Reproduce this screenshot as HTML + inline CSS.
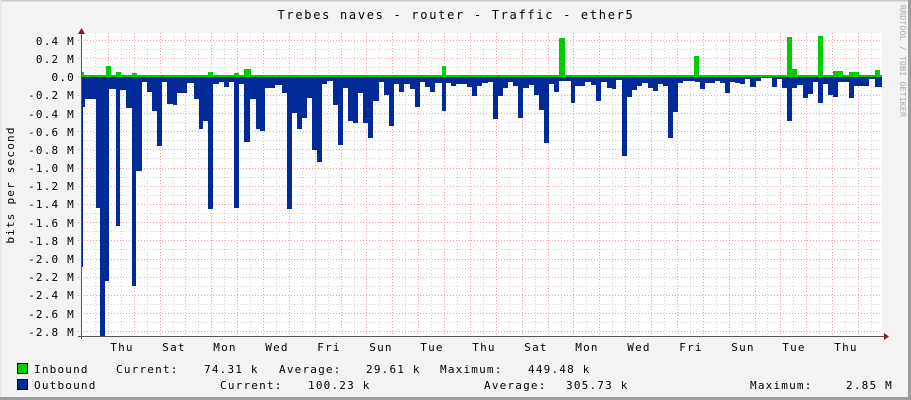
<!DOCTYPE html>
<html><head><meta charset="utf-8"><style>
html,body{margin:0;padding:0;background:#f3f3f3;}
svg{display:block;}
text{font-family:"DejaVu Sans Mono","Liberation Mono",monospace;fill:#000;}
</style></head><body>
<svg width="911" height="400" viewBox="0 0 911 400" xmlns="http://www.w3.org/2000/svg">
<rect x="0" y="0" width="911" height="400" fill="#f3f3f3"/>
<rect x="0" y="0" width="911" height="1.5" fill="#cbcbcb"/>
<rect x="0" y="0" width="1.5" height="400" fill="#e6e6e6"/>
<rect x="908" y="0" width="3" height="400" fill="#9c9c9c"/>
<rect x="0" y="397" width="911" height="3" fill="#9c9c9c"/>

<text x="456" y="19" font-size="12" letter-spacing="1.7" text-anchor="middle">Trebes naves - router - Traffic - ether5</text>

<rect x="81" y="33" width="801" height="303" fill="#fff"/>

<!-- minor horizontal -->
<path stroke="#d4d4d4" stroke-width="1" stroke-dasharray="1,2" fill="none" d="M81,49.5H882M81,67.5H882M81,86.5H882M81,104.5H882M81,122.5H882M81,140.5H882M81,158.5H882M81,177.5H882M81,195.5H882M81,213.5H882M81,231.5H882M81,249.5H882M81,268.5H882M81,286.5H882M81,304.5H882M81,322.5H882"/>
<!-- minor vertical -->
<path stroke="#d4d4d4" stroke-width="1" stroke-dasharray="1,2" fill="none" d="M95.5,33V339M121.5,33V339M147.5,33V339M173.5,33V339M198.5,33V339M224.5,33V339M250.5,33V339M276.5,33V339M302.5,33V339M328.5,33V339M354.5,33V339M379.5,33V339M405.5,33V339M431.5,33V339M457.5,33V339M483.5,33V339M509.5,33V339M535.5,33V339M561.5,33V339M586.5,33V339M612.5,33V339M638.5,33V339M664.5,33V339M690.5,33V339M716.5,33V339M742.5,33V339M767.5,33V339M793.5,33V339M819.5,33V339M845.5,33V339M871.5,33V339"/>
<!-- major horizontal -->
<path stroke="#f08888" stroke-opacity="0.8" stroke-width="1" stroke-dasharray="1,2" fill="none" d="M78,40.5H882M78,58.5H882M78,77.5H882M78,95.5H882M78,113.5H882M78,131.5H882M78,149.5H882M78,168.5H882M78,186.5H882M78,204.5H882M78,222.5H882M78,240.5H882M78,259.5H882M78,277.5H882M78,295.5H882M78,313.5H882M78,331.5H882"/>
<!-- major vertical -->
<path stroke="#f08888" stroke-opacity="0.8" stroke-width="1" stroke-dasharray="1,2" fill="none" d="M108.5,33V339M134.5,33V339M160.5,33V339M185.5,33V339M211.5,33V339M237.5,33V339M263.5,33V339M289.5,33V339M315.5,33V339M341.5,33V339M366.5,33V339M392.5,33V339M418.5,33V339M444.5,33V339M470.5,33V339M496.5,33V339M522.5,33V339M548.5,33V339M573.5,33V339M599.5,33V339M625.5,33V339M651.5,33V339M677.5,33V339M703.5,33V339M729.5,33V339M755.5,33V339M780.5,33V339M806.5,33V339M832.5,33V339M858.5,33V339"/>

<!-- inbound -->
<path fill="#00cc00" d="M81,77V72H84V75H106V66H111V75H116V72H121V75H132V73H137V75H208V72H213V75H234V73H239V75H244V69H251V75H442V66H446V75H559V38H565V75H694V56H699V75H787V37H792V69H797V75H818V36H823V75H833V71H843V75H849V72H859V75H875V70H880V75H882V77Z"/>
<!-- outbound -->
<path fill="#002a97" d="M81,77V267H83V107H85V99H96V208H100V336H105V281H109V89H116V226H120V90H126V108H132V286H136V171H142V82H147V92H152V111H157V146H162V82H167V104H173V105H177V93H187V83H194V99H199V129H203V121H208V209H213V84H219V82H224V87H229V82H234V208H239V84H244V142H250V99H256V129H260V131H265V88H275V85H282V93H287V209H292V113H297V129H302V118H307V98H312V150H317V162H322V84H327V81H333V105H338V145H343V88H348V121H353V123H358V93H363V123H368V138H373V101H379V82H384V95H389V126H394V84H399V92H404V84H410V89H415V107H420V82H425V87H430V92H435V83H442V111H446V83H451V86H456V84H467V87H472V96H477V86H482V83H488V82H493V119H498V96H503V88H508V82H513V86H518V118H523V88H529V85H534V95H539V110H544V143H549V84H554V92H559V81H571V103H575V86H585V82H591V85H596V101H601V82H607V88H612V89H616V80H622V156H627V97H632V90H637V86H642V83H648V88H653V91H658V84H663V86H668V138H673V112H678V83H683V81H695V82H700V89H705V83H715V81H720V83H725V93H730V82H735V83H740V84H745V79H750V87H756V81H761V78H772V87H777V79H782V88H787V121H792V88H797V85H803V98H808V94H813V82H818V103H823V84H828V95H833V97H838V82H849V98H854V86H869V79H875V87H882V77Z"/>

<!-- axes -->
<path stroke="#555" stroke-width="1" fill="none" d="M78,336.5H884M81.5,339V31"/>
<path fill="#8b1a1a" d="M884,333L889,336.5L884,340Z M78,34L81.5,28L85,34Z"/>

<!-- y labels -->
<g font-size="11" letter-spacing="1.2" text-anchor="end">
<text x="75" y="45">0.4 M</text>
<text x="75" y="63">0.2 M</text>
<text x="75" y="81">0.0</text>
<text x="75" y="99">-0.2 M</text>
<text x="75" y="118">-0.4 M</text>
<text x="75" y="136">-0.6 M</text>
<text x="75" y="154">-0.8 M</text>
<text x="75" y="172">-1.0 M</text>
<text x="75" y="190">-1.2 M</text>
<text x="75" y="208">-1.4 M</text>
<text x="75" y="227">-1.6 M</text>
<text x="75" y="245">-1.8 M</text>
<text x="75" y="263">-2.0 M</text>
<text x="75" y="281">-2.2 M</text>
<text x="75" y="299">-2.4 M</text>
<text x="75" y="318">-2.6 M</text>
<text x="75" y="336">-2.8 M</text>
</g>
<text transform="translate(14,185) rotate(-90)" font-size="11" letter-spacing="1.2" text-anchor="middle">bits per second</text>

<!-- x labels -->
<g font-size="11" letter-spacing="1.2" text-anchor="middle">
<text x="122" y="351">Thu</text>
<text x="174" y="351">Sat</text>
<text x="225" y="351">Mon</text>
<text x="277" y="351">Wed</text>
<text x="329" y="351">Fri</text>
<text x="381" y="351">Sun</text>
<text x="432" y="351">Tue</text>
<text x="484" y="351">Thu</text>
<text x="536" y="351">Sat</text>
<text x="587" y="351">Mon</text>
<text x="639" y="351">Wed</text>
<text x="691" y="351">Fri</text>
<text x="743" y="351">Sun</text>
<text x="794" y="351">Tue</text>
<text x="846" y="351">Thu</text>
</g>

<text transform="translate(900,5) rotate(90)" font-size="8.3" letter-spacing="0.1" fill="#a8a8a8" style="fill:#a8a8a8">RRDTOOL / TOBI OETIKER</text>

<!-- legend -->
<rect x="17.5" y="363.5" width="10" height="10" fill="#00cc00" stroke="#000"/>
<rect x="17.5" y="379.5" width="10" height="10" fill="#002a97" stroke="#000"/>
<g font-size="11" letter-spacing="1.2">
<text x="34" y="373">Inbound</text>
<text x="116" y="373">Current:</text>
<text x="204" y="373">74.31 k</text>
<text x="279" y="373">Average:</text>
<text x="366" y="373">29.61 k</text>
<text x="440" y="373">Maximum:</text>
<text x="528" y="373">449.48 k</text>
<text x="34" y="389">Outbound</text>
<text x="220" y="389">Current:</text>
<text x="308" y="389">100.23 k</text>
<text x="484" y="389">Average:</text>
<text x="566" y="389">305.73 k</text>
<text x="750" y="389">Maximum:</text>
<text x="846" y="389">2.85 M</text>
</g>
</svg>
</body></html>
